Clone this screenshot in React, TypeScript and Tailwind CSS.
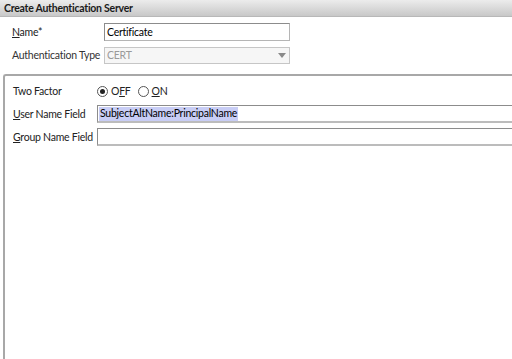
import React from "react";

function Radio({ checked }: { checked: boolean }) {
  return (
    <span className="w-[11px] h-[11px] rounded-full border border-[#555] bg-white flex items-center justify-center">
      {checked && <span className="w-[5px] h-[5px] rounded-full bg-[#222]" />}
    </span>
  );
}

export default function App() {
  return (
    <div className="w-[512px] h-[359px] bg-white overflow-hidden text-[10.5px] tracking-[-0.25px] text-[#222] font-['Lato','Segoe_UI',sans-serif] leading-none whitespace-nowrap flex flex-col">
      {/* Title bar */}
      <div className="h-[17px] shrink-0 bg-gradient-to-b from-[#ececec] to-[#c8c8c8] border-b border-[#b8b8b8] flex items-center pl-[4px] font-bold text-[#1a1a1a]">
        Create Authentication Server
      </div>

      {/* Top fields */}
      <div className="flex flex-col pt-[6px]">
        <div className="flex items-center h-[18px]">
          <label className="w-[104px] pl-[12px]">
            <span className="underline">N</span>ame*
          </label>
          <div className="w-[186px] h-[18px] border border-[#8c8c8c] border-b-[#b5b5b5] border-r-[#b5b5b5] flex items-center pl-[2px] text-black">
            Certificate
          </div>
        </div>
        <div className="flex items-center h-[17px] mt-[6px]">
          <label className="w-[104px] pl-[12px] text-[#333]">Authentication Type</label>
          <div className="w-[186px] h-[17px] border border-[#c6c6c6] bg-[#f6f6f6] flex items-center justify-between pl-[2px] pr-[3px] text-[#9a9a9a]">
            CERT
            <svg width="8" height="5" viewBox="0 0 8 5">
              <path d="M0 0h8L4 5z" fill="#8a8a8a" />
            </svg>
          </div>
        </div>
      </div>

      {/* Panel */}
      <div className="flex-1 mt-[10px] ml-[3px] border-l-2 border-t-2 border-[#a8a8a8] rounded-tl-[3px] pt-[6px]">
        <div className="flex items-center h-[18px]">
          <label className="w-[92px] pl-[8px]">Two Factor</label>
          <div className="flex items-center gap-[3px]">
            <Radio checked />
            <span className="mr-[4px]">
              O<span className="underline">F</span>F
            </span>
            <Radio checked={false} />
            <span>
              <span className="underline">O</span>N
            </span>
          </div>
        </div>
        <div className="flex items-center h-[18px] mt-[5px]">
          <label className="w-[92px] pl-[8px]">
            <span className="underline">U</span>ser Name Field
          </label>
          <div className="flex-1 h-[18px] border-t border-l border-[#8c8c8c] border-b-2 border-b-[#bcbcbc] flex items-center pl-[1px] text-black">
            <span className="bg-[#c8cdf5] px-[1px] h-[14px] flex items-center">SubjectAltName:PrincipalName</span>
          </div>
        </div>
        <div className="flex items-center h-[18px] mt-[5px]">
          <label className="w-[92px] pl-[8px]">
            <span className="underline">G</span>roup Name Field
          </label>
          <div className="flex-1 h-[18px] border-t border-l border-[#8c8c8c] border-b-2 border-b-[#bcbcbc]" />
        </div>
      </div>
    </div>
  );
}
